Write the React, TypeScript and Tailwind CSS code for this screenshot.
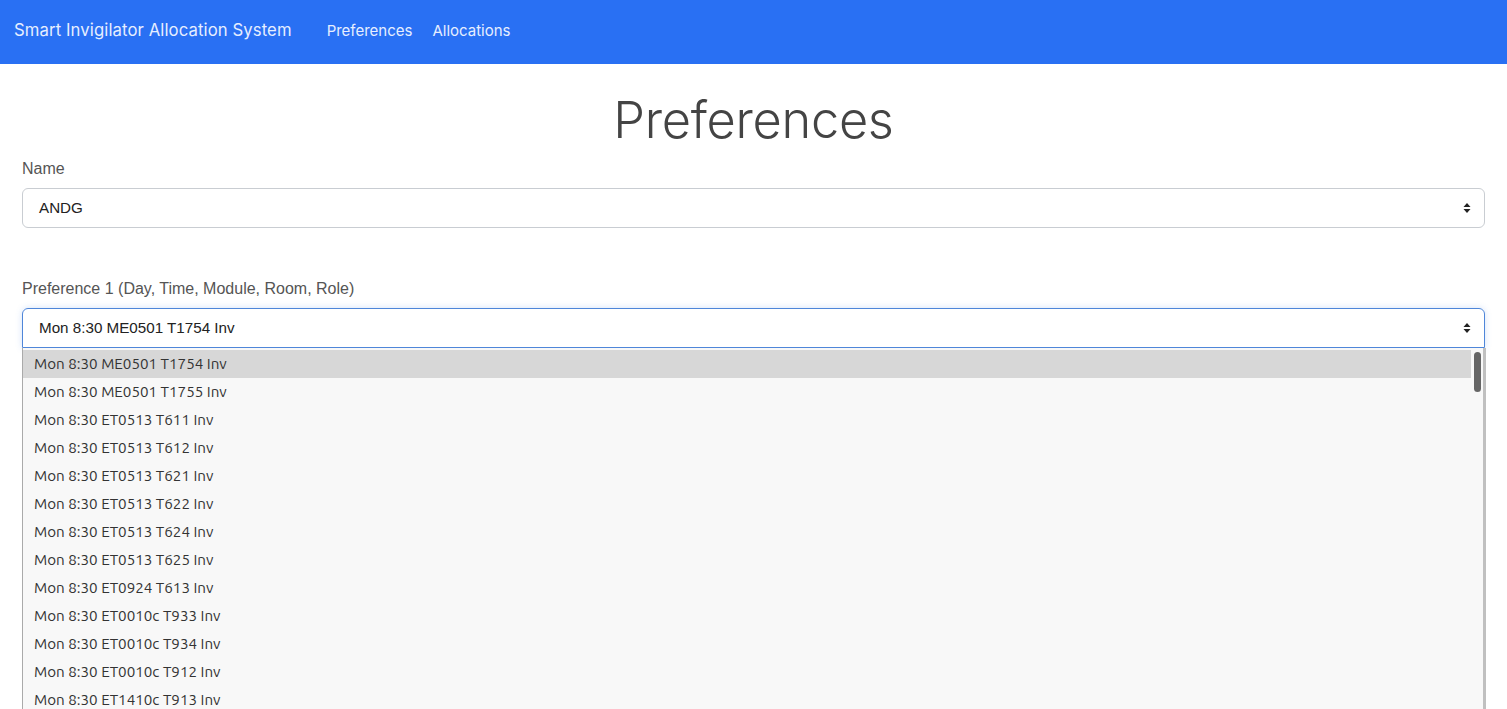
import { useState } from 'react';

const names = ['ANDG', 'BTAN', 'CHEN', 'DLIM'];

const options = [
  'Mon 8:30 ME0501 T1754 Inv',
  'Mon 8:30 ME0501 T1755 Inv',
  'Mon 8:30 ET0513 T611 Inv',
  'Mon 8:30 ET0513 T612 Inv',
  'Mon 8:30 ET0513 T621 Inv',
  'Mon 8:30 ET0513 T622 Inv',
  'Mon 8:30 ET0513 T624 Inv',
  'Mon 8:30 ET0513 T625 Inv',
  'Mon 8:30 ET0924 T613 Inv',
  'Mon 8:30 ET0010c T933 Inv',
  'Mon 8:30 ET0010c T934 Inv',
  'Mon 8:30 ET0010c T912 Inv',
  'Mon 8:30 ET1410c T913 Inv',
  'Mon 8:30 ET1410c T914 Inv',
];

function Arrows() {
  return (
    <svg width="8" height="12" viewBox="0 0 8 12" className="text-[#222]">
      <path d="M4 1 L7.5 5 H0.5 Z" fill="currentColor" />
      <path d="M4 11 L7.5 7 H0.5 Z" fill="currentColor" />
    </svg>
  );
}

export default function App() {
  const [name] = useState(names[0]);
  const [active] = useState(0);

  return (
    <div className="h-[709px] overflow-hidden bg-white font-['Liberation_Sans',sans-serif]">
      <nav className="h-16 bg-[#2970f3] flex items-center px-[14px] pb-[2px] font-['Inter',sans-serif] text-[#e6eeff]">
        <span className="text-[16.7px] tracking-[0.1px]">Smart Invigilator Allocation System</span>
        <div className="flex gap-5 ml-[35px] text-[15px]">
          <a href="#">Preferences</a>
          <a href="#">Allocations</a>
        </div>
      </nav>

      <main className="px-[22px] pt-[26px]">
        <h1 className="text-center text-[50.5px] leading-[60px] text-[#444] font-['Inter',sans-serif] font-[350] tracking-[-0.3px]">
          Preferences
        </h1>

        <label className="block mt-[7px] text-[16px] leading-[24px] text-[#555]">Name</label>
        <div className="mt-[7px] h-10 rounded-md border border-[#c9cdd2] flex items-center justify-between pl-4 pr-[13px]">
          <span className="text-[15.2px] text-[#222]">{name}</span>
          <Arrows />
        </div>

        <label className="block mt-[49px] text-[16px] leading-[24px] text-[#555]">
          Preference 1 (Day, Time, Module, Room, Role)
        </label>
        <div className="relative mt-[7px]">
          <div className="h-10 rounded-t-md border border-[#4f86d9] shadow-[0_0_6px_rgba(80,140,230,0.25)] flex items-center justify-between pl-4 pr-[13px]">
            <span className="text-[15.2px] text-[#222]">{options[active]}</span>
            <Arrows />
          </div>
          <div className="absolute left-0 right-[-1px] top-10 bg-[#f8f8f8] border-l border-r-[3px] border-[#c0c0c0] border-l-[#aaa] font-['Ubuntu','Open_Sans',sans-serif] text-[15.2px] text-[#333]">
            <div className="flex">
              <ul className="flex-1 pt-[2px]">
                {options.map((o, i) => (
                  <li
                    key={o}
                    className={`h-7 flex items-center pl-[11px] ${i === active ? 'bg-[#d7d7d7]' : ''}`}
                  >
                    {o}
                  </li>
                ))}
              </ul>
              <div className="w-[12px] relative">
                <div className="absolute left-[3px] top-[4px] w-[7px] h-[40px] rounded-full bg-[#666]" />
              </div>
            </div>
          </div>
        </div>
      </main>
    </div>
  );
}
